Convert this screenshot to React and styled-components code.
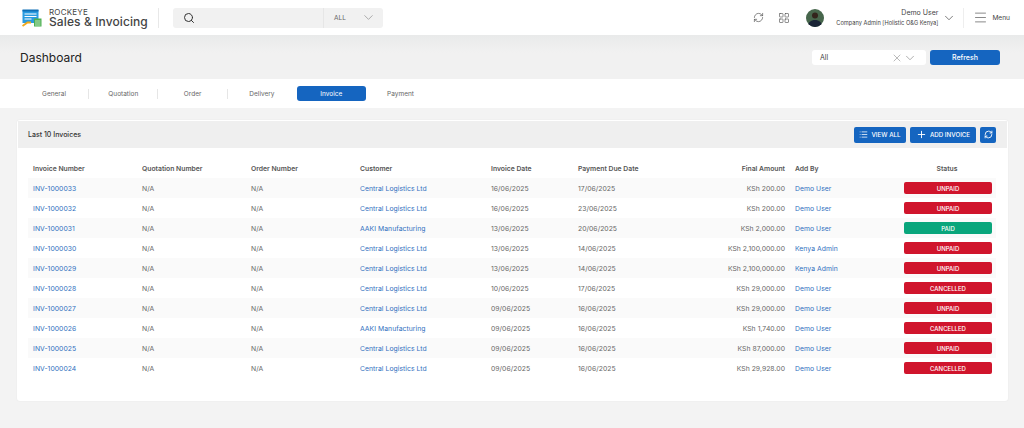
import React from 'react'
import styled, { createGlobalStyle } from 'styled-components'
import { Search, ChevronDown, RefreshCw, LayoutGrid, Menu, X, List, Plus } from 'lucide-react'

const GlobalStyle = createGlobalStyle`
   html, body {
      margin: 0;
      padding: 0;
      background: #f3f3f3;
      font-family: Inter, "Liberation Sans", sans-serif;
   }
   * { box-sizing: border-box; }
`

const Page = styled.div`
   width: 1024px;
   height: 428px;
   overflow: hidden;
   background: #f3f3f3;
`

// --- Header ---

const Header = styled.header`
   height: 35px;
   background: #fff;
   display: flex;
   align-items: center;
   padding: 0 14px 0 22px;
`

const Brand = styled.div`
   display: flex;
   align-items: center;
   gap: 7px;
   width: 137px;
   height: 20px;
   border-right: 1px solid #e8e8e8;
`

const BrandText = styled.div`
   display: flex;
   flex-direction: column;
   color: #444;
   line-height: 1;
   white-space: nowrap;
`

const BrandTop = styled.span`
   font-size: 8px;
   letter-spacing: 0.2px;
`

const BrandName = styled.span`
   font-size: 12px;
   font-weight: 500;
   letter-spacing: 0.1px;
`

const SearchBox = styled.div`
   margin-left: 14px;
   width: 210px;
   height: 20px;
   background: #f1f1f1;
   border-radius: 3px;
   display: flex;
   align-items: center;
   color: #333;
   padding-left: 10px;
`

const SearchFill = styled.div`
   flex: 1;
`

const SearchScope = styled.div`
   width: 60px;
   height: 100%;
   border-left: 1px solid #e6e6e6;
   display: flex;
   align-items: center;
   justify-content: space-between;
   padding: 0 7px 0 10px;
   font-size: 6.5px;
   color: #666;
`

const HeaderRight = styled.div`
   margin-left: auto;
   display: flex;
   align-items: center;
   color: #555;
`

const HeaderIcons = styled.div`
   display: flex;
   align-items: center;
   gap: 14px;
   margin-right: 16px;
`

const Avatar = styled.div`
   width: 18px;
   height: 18px;
   border-radius: 50%;
   overflow: hidden;
   margin-right: 12px;
`

const UserText = styled.div`
   display: flex;
   flex-direction: column;
   align-items: flex-end;
   white-space: nowrap;
   color: #444;
`

const UserName = styled.span`
   font-size: 7px;
   line-height: 11px;
`

const UserRole = styled.span`
   font-size: 5.7px;
   line-height: 10px;
`

const UserChevron = styled.div`
   display: flex;
   margin: 0 7px 0 4px;
`

const MenuBlock = styled.div`
   display: flex;
   align-items: center;
   gap: 4px;
   height: 20px;
   border-left: 1px solid #eee;
   padding-left: 9px;
   font-size: 6.6px;
   color: #444;
`

// --- Title bar ---

const TitleBar = styled.div`
   height: 44px;
   background: linear-gradient(#e9eaea, #f1f1f1 40%);
   display: flex;
   align-items: center;
   justify-content: space-between;
   padding: 1px 24px 0 20px;
`

const Title = styled.h1`
   margin: 0;
   font-size: 12px;
   font-weight: 400;
   color: #222;
`

const TitleActions = styled.div`
   display: flex;
   align-items: center;
   gap: 4px;
`

const Select = styled.div`
   width: 114px;
   height: 15px;
   background: #fff;
   border-radius: 3px;
   display: flex;
   align-items: center;
   padding: 0 9px 0 8px;
   font-size: 7px;
   color: #444;
`

const SelectLabel = styled.span`
   flex: 1;
`

const RefreshButton = styled.button`
   width: 70px;
   height: 15px;
   border: 0;
   padding: 0;
   border-radius: 3px;
   background: #1565c0;
   color: #fff;
   font: 500 7px Inter, "Liberation Sans", sans-serif;
`

// --- Tabs ---

const Tabs = styled.nav`
   height: 29px;
   background: #fff;
   display: flex;
   align-items: center;
   padding-left: 19.4px;
`

const Tab = styled.div`
   width: 69.3px;
   height: 15px;
   display: flex;
   align-items: center;
   justify-content: center;
   font-size: 6.5px;
   border-radius: 3px;
   color: ${(p) => (p.$active ? '#fff' : '#666')};
   background: ${(p) => (p.$active ? '#1565c0' : 'transparent')};
`

const TabDivider = styled.span`
   width: 1px;
   height: 10px;
   margin: 0 -0.5px;
   background: ${(p) => (p.$hidden ? 'transparent' : '#e6e6e6')};
`

// --- Card ---

const Card = styled.section`
   width: 991px;
   height: 281px;
   margin: 12px 0 0 17px;
   padding: 1px;
   background: #fff;
   border-radius: 3px;
   box-shadow: 0 0 2px rgba(0, 0, 0, 0.06);
   overflow: hidden;
`

const CardHeader = styled.div`
   height: 27px;
   background: #efefef;
   display: flex;
   align-items: center;
   justify-content: space-between;
   padding: 0 11px 0 10px;
`

const CardTitle = styled.h2`
   margin: 0;
   font-size: 7px;
   font-weight: 500;
   color: #333;
`

const CardActions = styled.div`
   display: flex;
   align-items: center;
   gap: 4px;
`

const ActionButton = styled.button`
   height: 16px;
   width: ${(p) => p.$width}px;
   border: 0;
   padding: 0;
   border-radius: 2px;
   background: #1565c0;
   color: #fff;
   display: flex;
   align-items: center;
   justify-content: center;
   gap: 3px;
   font: 500 6.2px Inter, "Liberation Sans", sans-serif;
`

const Table = styled.div`
   margin: 10px 0 0 10px;
   width: 968px;
`

const Row = styled.div`
   height: 20px;
   display: grid;
   grid-template-columns: 109px 109px 109px 131px 87px 110px 107px 108px 98px;
   align-items: center;
   background: ${(p) => (p.$striped ? '#fafafa' : 'transparent')};
`

const HeadCell = styled.div`
   padding: 1px 5px 0;
   font-size: 6.8px;
   font-weight: 600;
   color: #555;
   white-space: nowrap;
   text-align: ${(p) => p.$align || 'left'};
`

const Cell = styled.div`
   padding: 0 5px;
   font-size: 6.8px;
   letter-spacing: 0.05px;
   color: ${(p) => (p.$link ? '#2f6fbe' : '#666')};
   white-space: nowrap;
   text-align: ${(p) => p.$align || 'left'};
`

const StatusCell = styled.div`
   padding-left: 6px;
`

const Badge = styled.div`
   width: 88px;
   height: 12px;
   border-radius: 2px;
   display: flex;
   align-items: center;
   justify-content: center;
   color: #fff;
   font-size: 6px;
   font-weight: 500;
   background: ${(p) => (p.$status === 'PAID' ? '#0aa67c' : '#d0152c')};
`

const invoices = [
   ['INV-1000033', 'Central Logistics Ltd', '16/06/2025', '17/06/2025', 'KSh 200.00', 'Demo User', 'UNPAID'],
   ['INV-1000032', 'Central Logistics Ltd', '16/06/2025', '23/06/2025', 'KSh 200.00', 'Demo User', 'UNPAID'],
   ['INV-1000031', 'AAKI Manufacturing', '13/06/2025', '20/06/2025', 'KSh 2,000.00', 'Demo User', 'PAID'],
   ['INV-1000030', 'Central Logistics Ltd', '13/06/2025', '14/06/2025', 'KSh 2,100,000.00', 'Kenya Admin', 'UNPAID'],
   ['INV-1000029', 'Central Logistics Ltd', '13/06/2025', '14/06/2025', 'KSh 2,100,000.00', 'Kenya Admin', 'UNPAID'],
   ['INV-1000028', 'Central Logistics Ltd', '10/06/2025', '17/06/2025', 'KSh 29,000.00', 'Demo User', 'CANCELLED'],
   ['INV-1000027', 'Central Logistics Ltd', '09/06/2025', '16/06/2025', 'KSh 29,000.00', 'Demo User', 'UNPAID'],
   ['INV-1000026', 'AAKI Manufacturing', '09/06/2025', '16/06/2025', 'KSh 1,740.00', 'Demo User', 'CANCELLED'],
   ['INV-1000025', 'Central Logistics Ltd', '09/06/2025', '16/06/2025', 'KSh 87,000.00', 'Demo User', 'UNPAID'],
   ['INV-1000024', 'Central Logistics Ltd', '09/06/2025', '16/06/2025', 'KSh 29,928.00', 'Demo User', 'CANCELLED'],
]

const Logo = () => (
   <svg width="20" height="18" viewBox="0 0 20 18">
      <rect x="0.500" y="1" width="16" height="13" fill="#2a9be0" />
      <rect x="0.500" y="0.500" width="16" height="2" fill="#0f6fb5" />
      <path d="M2.500 5h12M2.500 7.500h12M2.500 10h7" stroke="#fff" strokeWidth="1" />
      <path d="M0.500 17l5-3.500h3.500" stroke="#f0a91c" strokeWidth="1.800" fill="none" />
      <rect x="12" y="9.500" width="7.500" height="8" fill="#4caf50" />
      <path d="M13 12h5.500M13 14h5.500M13 16h5.500" stroke="#d8f0d8" strokeWidth="0.800" />
   </svg>
)

const AvatarArt = () => (
   <svg width="18" height="18" viewBox="0 0 18 18">
      <rect width="18" height="18" fill="#47664c" />
      <path d="M2 18c0-5 3-7 7-7s7 2 7 7z" fill="#1a2436" />
      <circle cx="9" cy="6.500" r="3" fill="#33241c" />
   </svg>
)

function App() {
   return (
      <Page>
         <GlobalStyle />
         <Header>
            <Brand>
               <Logo />
               <BrandText>
                  <BrandTop>ROCKEYE</BrandTop>
                  <BrandName>Sales &amp; Invoicing</BrandName>
               </BrandText>
            </Brand>
            <SearchBox>
               <Search size={12} />
               <SearchFill />
               <SearchScope>
                  ALL
                  <ChevronDown size={15} strokeWidth={0.8} />
               </SearchScope>
            </SearchBox>
            <HeaderRight>
               <HeaderIcons>
                  <RefreshCw size={11} strokeWidth={1.5} />
                  <LayoutGrid size={12} strokeWidth={1.3} />
               </HeaderIcons>
               <Avatar>
                  <AvatarArt />
               </Avatar>
               <UserText>
                  <UserName>Demo User</UserName>
                  <UserRole>Company Admin [Holistic O&amp;G Kenya]</UserRole>
               </UserText>
               <UserChevron>
                  <ChevronDown size={14} strokeWidth={1.3} />
               </UserChevron>
               <MenuBlock>
                  <Menu size={15} strokeWidth={1} />
                  Menu
               </MenuBlock>
            </HeaderRight>
         </Header>

         <TitleBar>
            <Title>Dashboard</Title>
            <TitleActions>
               <Select>
                  <SelectLabel>All</SelectLabel>
                  <X size={12} strokeWidth={1} color="#777" />
                  <ChevronDown size={14} strokeWidth={1} color="#777" />
               </Select>
               <RefreshButton>Refresh</RefreshButton>
            </TitleActions>
         </TitleBar>

         <Tabs>
            <Tab>General</Tab>
            <TabDivider />
            <Tab>Quotation</Tab>
            <TabDivider />
            <Tab>Order</Tab>
            <TabDivider />
            <Tab>Delivery</Tab>
            <TabDivider $hidden />
            <Tab $active>Invoice</Tab>
            <TabDivider $hidden />
            <Tab>Payment</Tab>
         </Tabs>

         <Card>
            <CardHeader>
               <CardTitle>Last 10 Invoices</CardTitle>
               <CardActions>
                  <ActionButton $width={52}>
                     <List size={9} />
                     VIEW ALL
                  </ActionButton>
                  <ActionButton $width={66}>
                     <Plus size={11} />
                     ADD INVOICE
                  </ActionButton>
                  <ActionButton $width={16}>
                     <RefreshCw size={9} strokeWidth={2.4} />
                  </ActionButton>
               </CardActions>
            </CardHeader>
            <Table>
               <Row>
                  <HeadCell>Invoice Number</HeadCell>
                  <HeadCell>Quotation Number</HeadCell>
                  <HeadCell>Order Number</HeadCell>
                  <HeadCell>Customer</HeadCell>
                  <HeadCell>Invoice Date</HeadCell>
                  <HeadCell>Payment Due Date</HeadCell>
                  <HeadCell $align="right">Final Amount</HeadCell>
                  <HeadCell>Add By</HeadCell>
                  <HeadCell $align="center">Status</HeadCell>
               </Row>
               {invoices.map((inv, i) => (
                  <Row key={inv[0]} $striped={i % 2 === 0}>
                     <Cell $link>{inv[0]}</Cell>
                     <Cell>N/A</Cell>
                     <Cell>N/A</Cell>
                     <Cell $link>{inv[1]}</Cell>
                     <Cell>{inv[2]}</Cell>
                     <Cell>{inv[3]}</Cell>
                     <Cell $align="right">{inv[4]}</Cell>
                     <Cell $link>{inv[5]}</Cell>
                     <StatusCell>
                        <Badge $status={inv[6]}>{inv[6]}</Badge>
                     </StatusCell>
                  </Row>
               ))}
            </Table>
         </Card>
      </Page>
   )
}

export default App
